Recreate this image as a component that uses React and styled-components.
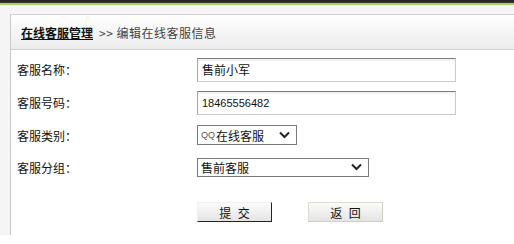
import React from "react"
import styled, { createGlobalStyle } from "styled-components"

const GlobalStyle = createGlobalStyle`
  html, body {
    margin: 0;
    padding: 0;
    background: #fff;
    overflow: hidden;
  }
  body {
    min-height: 244px;
    font-family: "Noto Sans CJK SC", "Liberation Sans", sans-serif;
    font-size: 12px;
    color: #222;
  }
`

const TopBar = styled.div`
  height: 3px;
  background: linear-gradient(#1f1f1f, #3a3a3a);
  border-bottom: 2px solid #a6d35a;
`

const Main = styled.div`
  background: #f5f5f5;
  padding: 9px 0 0 10px;
  height: 230px;
  box-sizing: border-box;
  display: flex;
`

const Panel = styled.div`
  flex: 1;
  background: #fff;
  border-left: 1px solid #c9c9c9;
  border-top: 1px solid #d2d2d2;
  display: flex;
  flex-direction: column;
`

const Header = styled.div`
  height: 34px;
  display: flex;
  align-items: center;
  padding-left: 10px;
  background: linear-gradient(#ffffff, #ececec);
  border-bottom: 1px solid #cfcfcf;
  color: #333;
  font-size: 12px;
  gap: 6px;
`

const HeaderLink = styled.a`
  color: #111;
  font-weight: bold;
  text-decoration: underline;
`

const Crumb = styled.span`
  color: #444;
  letter-spacing: 0.5px;
`

const Form = styled.div`
  padding: 3px 0 0 6px;
  display: flex;
  flex-direction: column;
`

const Row = styled.div`
  display: flex;
  align-items: center;
  height: ${p => p.$h || 33}px;
`

const Label = styled.div`
  width: 180px;
  color: #111;
`

const TextInput = styled.input`
  box-sizing: border-box;
  width: 259px;
  height: 24px;
  margin: 0;
  padding: 0 0 0 4px;
  border: 1px solid #cbcbcb;
  border-top-color: #7c7c7c;
  border-left-color: #a6a6a6;
  box-shadow: inset 0 2px 2px rgba(0, 0, 0, 0.06);
  font-family: ${p => (p.$num ? '"Liberation Sans", Arial, sans-serif' : '"Noto Sans CJK SC", sans-serif')};
  font-size: ${p => (p.$num ? 11 : 12)}px;
  color: #111;
  outline: none;
`

const SelectBox = styled.div`
  position: relative;
  box-sizing: border-box;
  width: ${p => p.$w}px;
  height: ${p => p.$h}px;
  border: 1px solid #7a7a7a;
  background: #fff;
  display: flex;
  align-items: center;
`

const SelectText = styled.span`
  padding-left: 3px;
  font-size: 12px;
  color: #111;
  white-space: nowrap;
  display: flex;
  align-items: center;
`

const SmallQ = styled.span`
  font-family: "Liberation Sans", sans-serif;
  font-size: 9px;
  color: #555;
  margin-right: 1px;
`

const Chevron = styled.svg`
  position: absolute;
  right: 6px;
  top: 50%;
  transform: translateY(-50%);
`

const Buttons = styled.div`
  display: flex;
  gap: 36px;
  padding: 19px 0 0 180px;
`

const Button = styled.button`
  box-sizing: border-box;
  width: 75px;
  height: 20px;
  margin: 0;
  padding: 0;
  font-family: "Noto Sans CJK SC", sans-serif;
  font-size: 12px;
  color: #111;
  word-spacing: 4px;
  background: linear-gradient(#fbfbfb, #e4e4e4);
  border: 1px solid ${p => (p.$primary ? "#f0f0f0" : "#dcdccc")};
  border-right-color: ${p => (p.$primary ? "#222" : "#cfcfbf")};
  border-bottom-color: ${p => (p.$primary ? "#222" : "#cfcfbf")};
`

const ArrowDown = () => (
  <Chevron width="11" height="7" viewBox="0 0 11 7">
    <path d="M1 1 L5.5 5.5 L10 1" fill="none" stroke="#222" strokeWidth="2" />
  </Chevron>
)

export default function App() {
  return (
    <>
      <GlobalStyle />
      <TopBar />
      <Main>
        <Panel>
          <Header>
            <HeaderLink>在线客服管理</HeaderLink>
            <Crumb>&gt;&gt; 编辑在线客服信息</Crumb>
          </Header>
          <Form>
            <Row>
              <Label>客服名称：</Label>
              <TextInput defaultValue="售前小军" />
            </Row>
            <Row>
              <Label>客服号码：</Label>
              <TextInput $num defaultValue="18465556482" />
            </Row>
            <Row $h={32}>
              <Label>客服类别：</Label>
              <SelectBox $w={100} $h={20}>
                <SelectText>
                  <SmallQ>QQ</SmallQ>在线客服
                </SelectText>
                <ArrowDown />
              </SelectBox>
            </Row>
            <Row $h={32}>
              <Label>客服分组：</Label>
              <SelectBox $w={172} $h={19}>
                <SelectText>售前客服</SelectText>
                <ArrowDown />
              </SelectBox>
            </Row>
            <Buttons>
              <Button $primary>提 交</Button>
              <Button>返 回</Button>
            </Buttons>
          </Form>
        </Panel>
      </Main>
    </>
  )
}
